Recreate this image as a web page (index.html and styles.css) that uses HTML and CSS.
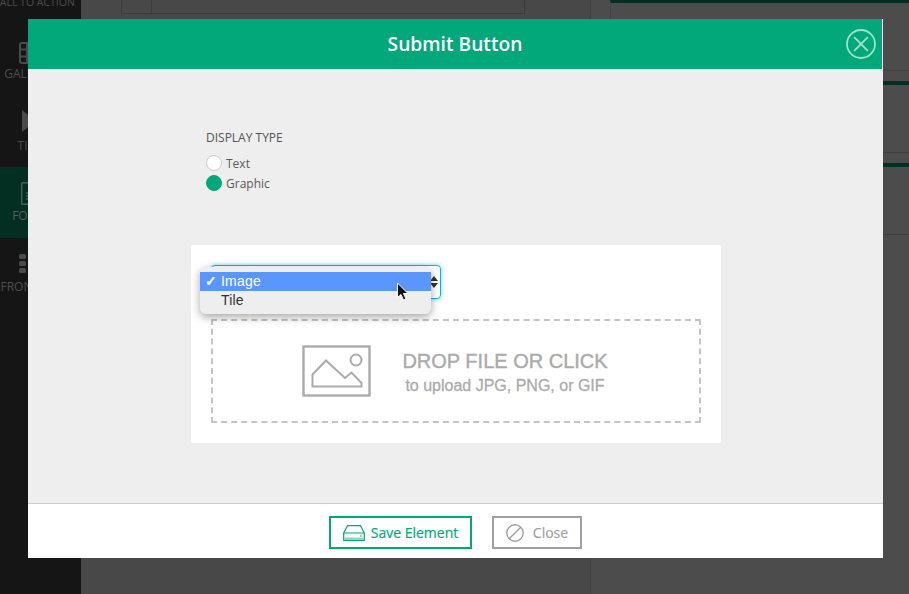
FILE: index.html
```html
<!DOCTYPE html>
<html lang="en">
<head>
<meta charset="utf-8">
<title>Submit Button</title>
<link rel="stylesheet" href="styles.css">
</head>
<body>
<div class="app">
  <nav class="sidebar">
    <div class="nav-item nav-cta"><span class="nav-label">CALL TO ACTION</span></div>
    <div class="nav-item nav-gallery">
      <svg class="nav-icon" width="20" height="22" viewBox="0 0 20 22"><rect x="1" y="1" width="18" height="20" rx="2" fill="none" stroke="#4a4a4a" stroke-width="2"/><path d="M1 7.500h18M1 14.500h18M8 1v20" stroke="#4a4a4a" stroke-width="2"/></svg>
      <span class="nav-label">GALLERY</span>
    </div>
    <div class="nav-item nav-tile">
      <svg class="nav-icon" width="14" height="22" viewBox="0 0 14 22"><path d="M0 0l14 11L0 22z" fill="#4a4a4a"/></svg>
      <span class="nav-label">TILE</span>
    </div>
    <div class="nav-item nav-form">
      <svg class="nav-icon" width="16" height="23" viewBox="0 0 16 23"><rect x=".7" y=".7" width="14.600" height="21.600" rx="1" fill="none" stroke="#4a5a52" stroke-width="1.400"/><path d="M5 11h8M5 14h8M5 17h8" stroke="#4a5a52" stroke-width="1.400"/></svg>
      <span class="nav-label">FORM</span>
    </div>
    <div class="nav-item nav-front">
      <svg class="nav-icon" width="20" height="19" viewBox="0 0 20 19"><rect x="0" y="0" width="7" height="5" rx="1.500" fill="#4a4a4a"/><rect x="0" y="7" width="7" height="5" rx="1.500" fill="#4a4a4a"/><rect x="0" y="14" width="7" height="5" rx="1.500" fill="#4a4a4a"/><rect x="10" y="0" width="7" height="5" rx="1.500" fill="#4a4a4a"/><rect x="10" y="7" width="7" height="5" rx="1.500" fill="#4a4a4a"/><rect x="10" y="14" width="7" height="5" rx="1.500" fill="#4a4a4a"/></svg>
      <span class="nav-label nav-label-front">FRONTEND</span>
    </div>
  </nav>
  <main class="canvas"><div class="canvas-input"><span class="canvas-cell"></span><span class="canvas-field"></span></div></main>
  <aside class="panel">
    <div class="panel-row"></div>
    <div class="panel-row"></div>
    <div class="panel-row"></div>
  </aside>
</div>

<section class="modal">
  <header class="modal-head">
    <h1 class="modal-title">Submit Button</h1>
    <svg class="modal-x" width="30" height="30" viewBox="0 0 30 30"><circle cx="15" cy="15" r="14" fill="none" stroke="#9be3c9" stroke-width="1.800"/><path d="M8.200 8.200l13.600 13.600M21.800 8.200L8.200 21.800" stroke="#9be3c9" stroke-width="1.900"/></svg>
  </header>
  <div class="modal-body">
    <div class="display-type">
      <div class="field-label">DISPLAY TYPE</div>
      <div class="radio-row"><span class="radio"></span><span>Text</span></div>
      <div class="radio-row"><span class="radio radio-on"></span><span>Graphic</span></div>
    </div>
    <div class="upload-card">
      <div class="select-box"><span class="select-arrows"></span></div>
      <div class="dropzone">
        <svg class="drop-icon" width="70" height="53" viewBox="0 0 70 53"><rect x="1.500" y="1.500" width="66" height="49" fill="none" stroke="#ababab" stroke-width="2.400"/><circle cx="54" cy="15" r="5.500" fill="none" stroke="#ababab" stroke-width="2"/><path d="M10.500 41.500V29.500L24 15.500L43 33L49.500 27.500L59.500 38V41.500Z" fill="none" stroke="#ababab" stroke-width="2"/></svg>
        <div class="drop-text">
          <div class="drop-main">DROP FILE OR CLICK</div>
          <div class="drop-sub">to upload JPG, PNG, or GIF</div>
        </div>
      </div>
      <div class="select-menu">
        <div class="option option-on"><span class="check">✓</span>Image</div>
        <div class="option"><span class="check"></span>Tile</div>
      </div>
      <svg class="cursor" width="14" height="20" viewBox="0 0 14 20"><path d="M1.500 1V15.500L5 12.500L7.500 18L10 17L7.500 11.500H12Z" fill="#111" stroke="#fff" stroke-width="1"/></svg>
    </div>
  </div>
  <footer class="modal-foot">
    <button class="btn btn-save">
      <svg width="22" height="16" viewBox="0 0 22 16"><path d="M4.500 .7h13L21.300 8v7.300H.7V8zM.7 8h20.600" fill="none" stroke="#02a87a" stroke-width="1.200"/><path d="M1 12.500h20v2.500H1z" fill="#8fd8c0"/><circle cx="18" cy="11" r=".8" fill="#02a87a"/></svg>
      <span>Save Element</span>
    </button>
    <button class="btn btn-close">
      <svg width="18" height="18" viewBox="0 0 18 18"><circle cx="9" cy="9" r="8.200" fill="none" stroke="#9f9f9f" stroke-width="1.400"/><path d="M3.200 14.800L14.800 3.200" stroke="#9f9f9f" stroke-width="1.400"/></svg>
      <span>Close</span>
    </button>
  </footer>
</section>
</body>
</html>
```
FILE: styles.css
```css
* { box-sizing: border-box; }
html, body { margin: 0; height: 100%; overflow: hidden; }
body { font-family: "Open Sans", "Noto Sans", sans-serif; background: #484848; }

.app { display: flex; width: 909px; height: 594px; }

.sidebar { width: 81px; background: #151515; display: flex; flex-direction: column; flex: none; overflow: hidden; }
.nav-item { display: flex; flex-direction: column; align-items: center; color: #4d4d4d; width: 58px; flex: none; }
.nav-label { font-size: 12px; line-height: 14px; white-space: nowrap; }
.nav-label-front { margin-left: 6px; }
.nav-cta { height: 14px; margin-top: -5px; margin-left: 5px; }
.nav-cta .nav-label { font-size: 10.500px; }
.nav-gallery { height: 76px; padding-top: 33px; gap: 3px; }
.nav-tile { height: 82px; padding-top: 25px; gap: 7px; }
.nav-form { height: 71px; width: 81px; padding: 15px 23px 0 0; gap: 4px; background: #032f22; color: #565d5a; }
.nav-front { height: 70px; padding-top: 16px; gap: 7px; }
.nav-icon { flex: none; }

.canvas { width: 510px; flex: none; background: #484848; border-right: 1px solid #3e3e3e; padding-left: 40px; }
.canvas-input { display: flex; width: 404px; height: 14px; border: 1px solid #3c3c3c; border-top: 0; }
.canvas-cell { width: 30px; border-right: 1px solid #3c3c3c; }
.canvas-field { flex: 1; }

.panel { flex: 1; background: #4c4c4c; display: flex; flex-direction: column; padding-left: 19px; }
.panel-row { height: 72px; margin-top: 10px; border-top: 4px solid #032f22; border-bottom: 1px solid #414141; }
.panel-row:first-child { margin-top: 0; height: 71px; border-top-width: 3px; border-left: 1px solid #414141; }

.modal { position: absolute; left: 28px; top: 19px; width: 855px; height: 539px; display: flex; flex-direction: column; background: #fff; }
.modal-head { height: 50px; flex: none; width: 854px; background: #02a87a; position: relative; display: flex; align-items: center; justify-content: center; padding-bottom: 2px; }
.modal-title { margin: 0; color: #fff; font-size: 19.200px; font-weight: 600; }
.modal-x { position: absolute; right: 6px; top: 10px; }

.modal-body { height: 434px; flex: none; background: #eee; display: flex; flex-direction: column; align-items: flex-start; padding: 60px 0 0 163px; }
.display-type { height: 116px; padding-left: 15px; font-size: 12px; color: #5a5a5a; }
.field-label { font-size: 12px; line-height: 17px; margin-bottom: 7px; color: #555; }
.radio-row { display: flex; align-items: center; height: 20px; gap: 4px; }
.radio { width: 16px; height: 16px; border-radius: 50%; background: #fff; border: 1px solid #ccc; }
.radio-on { background: #02a87a; border-color: #02a87a; }

.upload-card { position: relative; width: 530px; height: 198px; background: #fff; padding: 20px; }
.select-box { width: 230px; height: 34px; border: 1px solid #0db0e8; border-radius: 4px; box-shadow: 0 0 4px rgba(13,176,232,.6); position: relative; }
.select-arrows { position: absolute; right: 2px; top: 9px; width: 0; height: 16px; border-left: 4px solid transparent; border-right: 4px solid transparent; }
.select-arrows::before, .select-arrows::after { content: ""; position: absolute; left: -4px; border-left: 4px solid transparent; border-right: 4px solid transparent; }
.select-arrows::before { top: 1px; border-bottom: 5px solid #333; }
.select-arrows::after { top: 8px; border-top: 5px solid #333; }

.dropzone { margin-top: 20px; width: 490px; height: 104px; border: 2px dashed #c4c4c4; display: flex; align-items: center; justify-content: center; gap: 30px; font-family: "Liberation Sans", Arial, sans-serif; color: #ababab; padding-right: 2px; }
.drop-icon { flex: none; }
.drop-text { text-align: center; padding-top: 3px; }
.drop-main { font-size: 20px; line-height: 24px; -webkit-text-stroke: .4px #ababab; }
.drop-sub { font-size: 16px; line-height: 20px; margin-top: 3px; -webkit-text-stroke: .3px #ababab; }

.select-menu { position: absolute; left: 9px; top: 22px; width: 231px; height: 47px; border-radius: 6px; background: #eee; box-shadow: 0 3px 8px rgba(0,0,0,.35); padding-top: 5px; font-family: "Liberation Sans", Arial, sans-serif; font-size: 14px; letter-spacing: .2px; color: #333; }
.option { height: 19px; line-height: 19px; display: flex; align-items: center; }
.option-on { background: #5a96fe; color: #fff; }
.check { width: 21px; padding-left: 5px; font-size: 14px; font-family: "DejaVu Sans", sans-serif; font-weight: 700; -webkit-text-stroke: .5px #fff; }
.cursor { position: absolute; left: 205px; top: 37px; }

.modal-foot { flex: 1; border-top: 1px solid #ccc; background: #fff; display: flex; justify-content: center; align-items: center; gap: 20px; padding-top: 3px; }
.btn { height: 33px; border: 2px solid; background: #fff; display: flex; align-items: center; justify-content: center; font-family: "Open Sans", sans-serif; font-size: 14px; font-weight: 500; padding: 0; -webkit-text-stroke: .2px currentColor; }
.btn-save { width: 143px; border-color: #02a87a; color: #02a87a; gap: 6px; }
.btn-close { width: 90px; border-color: #a0a0a0; color: #a0a0a0; gap: 9px; }
```
